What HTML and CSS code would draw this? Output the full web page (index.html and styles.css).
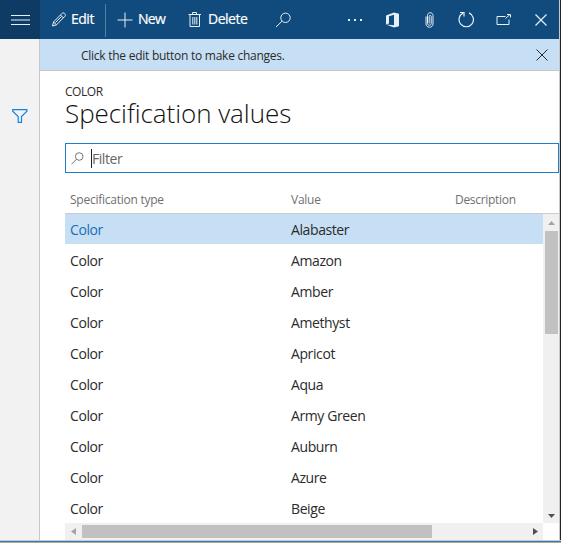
FILE: index.html
```html
<!DOCTYPE html>
<html lang="en">
<head>
<meta charset="utf-8">
<title>Specification values</title>
<link rel="stylesheet" href="styles.css">
</head>
<body>
<div class="window">
  <header class="toolbar">
    <button class="menu" aria-label="Menu"><svg width="20" height="12" viewBox="0 0 20 12"><path d="M0 1.500h19M0 6h19M0 10.500h19"/></svg></button>
    <button class="action edit"><svg width="17" height="17" viewBox="0 0 17 17"><path d="M1.500 15l1-4L11 2.400c1.700-1.700 4.600 1.200 2.900 2.900L5.500 13.800zM9.500 4l3 3M2.500 11l3 2.800M4.500 11.500l6-6"/></svg><span>Edit</span></button>
    <button class="action new"><svg width="16" height="16" viewBox="0 0 16 16"><path d="M8 .5v15M.5 8h15"/></svg><span>New</span></button>
    <button class="action delete"><svg width="14" height="16" viewBox="0 0 14 16"><path d="M.5 2.500h12.500M4.500 2.500v-2h4v2M2 2.500v12h9.500v-12M4.800 5v7.500M6.800 5v7.500M8.800 5v7.500"/></svg><span>Delete</span></button>
    <button class="search" aria-label="Search"><svg width="17" height="16" viewBox="0 0 17 16"><circle cx="10.500" cy="5.800" r="4.700"/><path d="M7 9.200L1 15"/></svg></button>
    <div class="tools">
      <svg class="more" width="16" height="4" viewBox="0 0 16 4"><path d="M1 1h2v2H1zM7 1h2v2H7zM13 1h2v2h-2z"/></svg>
      <svg class="office" width="13" height="16" viewBox="0 0 13 16"><path fill-rule="evenodd" d="M0 3.500L8 .5l5 1.300v12.400L8 15.500l-8-3 8 .7V2.800L3 4.200v7.300l-3 1z"/></svg>
      <svg class="clip" width="9" height="16" viewBox="0 0 9 16"><path d="M1 4.500v7.500c0 4.300 7 4.300 7 0V3.500c0-3.700-5.500-3.700-5.500 0v8c0 2.400 3.700 2.400 3.700 0V4.500c0-1.500-2-1.500-2 0v7"/></svg>
      <svg class="refresh" width="17" height="17" viewBox="0 0 17 17"><path d="M5 2.100A7.200 7.200 0 1 0 11 1.900M2 1.500h4v4"/></svg>
      <svg class="popout" width="16" height="13" viewBox="0 0 16 13"><path d="M9.500 3.500H1v8h12V6.500M9.500 5.500l4.500-4M11 1.500h3.500v3"/></svg>
      <svg class="close" width="12" height="12" viewBox="0 0 12 12"><path d="M.5.5l11 11M11.500.5l-11 11"/></svg>
    </div>
  </header>
  <div class="body">
    <aside class="rail"><svg width="16" height="14" viewBox="0 0 16 14"><path d="M.7.700h14.200v1.500L9.500 7.500v5.800H6.200V7.500L.7 2.200z"/></svg></aside>
    <main class="main">
      <div class="message"><span class="message-text">Click the edit button to make changes.</span><svg width="12" height="12" viewBox="0 0 12 12"><path d="M.5.5l11 11M11.500.5l-11 11"/></svg></div>
      <div class="page">
        <div class="caption">COLOR</div>
        <h1>Specification values</h1>
        <div class="filter"><svg width="13" height="13" viewBox="0 0 13 13"><circle cx="8.200" cy="4.500" r="3.800"/><path d="M5.500 7.200L.5 12.300"/></svg><i class="caret"></i><span>Filter</span></div>
        <div class="heads"><span class="h-type">Specification type</span><span class="h-value">Value</span><span class="h-desc">Description</span></div>
        <div class="grid">
          <div class="rows">
            <div class="row selected"><span>Color</span><span>Alabaster</span></div>
            <div class="row"><span>Color</span><span>Amazon</span></div>
            <div class="row"><span>Color</span><span>Amber</span></div>
            <div class="row"><span>Color</span><span>Amethyst</span></div>
            <div class="row"><span>Color</span><span>Apricot</span></div>
            <div class="row"><span>Color</span><span>Aqua</span></div>
            <div class="row"><span>Color</span><span>Army Green</span></div>
            <div class="row"><span>Color</span><span>Auburn</span></div>
            <div class="row"><span>Color</span><span>Azure</span></div>
            <div class="row"><span>Color</span><span>Beige</span></div>
          </div>
          <div class="vscroll"><svg width="7" height="4" viewBox="0 0 7 4"><path fill="#a3a3a3" d="M0 4L3.500 0 7 4z"/></svg><div class="vthumb"></div><svg class="down" width="7" height="4" viewBox="0 0 7 4"><path fill="#505050" d="M0 0h7L3.500 4z"/></svg></div>
          <div class="hscroll"><svg width="5" height="7" viewBox="0 0 5 7"><path fill="#a3a3a3" d="M5 0v7L0 3.500z"/></svg><div class="hthumb"></div><svg class="right" width="5" height="7" viewBox="0 0 5 7"><path fill="#505050" d="M0 0l5 3.500L0 7z"/></svg></div>
        </div>
      </div>
    </main>
  </div>
  <div class="edge"></div>
</div>
</body>
</html>
```
FILE: styles.css
```css
* { box-sizing: border-box; }
body {
  margin: 0;
  width: 561px;
  height: 543px;
  overflow: hidden;
  background: #fff;
  font-family: "Open Sans", "Noto Sans", sans-serif;
  color: #2b2b2b;
}
svg { display: block; flex: none; fill: none; stroke: currentColor; stroke-width: 1; }
button { border: 0; padding: 0; background: none; font: inherit; color: inherit; }
.window {
  height: 543px;
  display: flex;
  flex-direction: column;
  border-right: 1px solid #222;
  box-shadow: inset -1px 0 #c8c8c8;
  padding-right: 1px;
}
.edge { height: 3px; flex: none; margin-right: -2px; border-top: 1px solid #c8c8c8; background: #2f7fc0; border-bottom: 1px solid #ada69b; }
.toolbar { height: 39px; flex: none; display: flex; background: #114a7c; color: #e6f0f8; }
.menu { width: 40px; background: #0e3b64; display: flex; align-items: center; padding-left: 11px; }
.menu svg { stroke-width: 1.200; }
.action { display: flex; align-items: center; font-size: 14px; -webkit-text-stroke: .2px; white-space: nowrap; }
.action span { position: relative; top: -1px; color: #fff; }
.edit { width: 66px; height: 33px; margin-top: 4px; padding: 0 0 2px 11px; gap: 3px; border-right: 1px solid #55809f; }
.edit span { letter-spacing: -.5px; }
.new { width: 82px; padding-left: 11px; gap: 5px; }
.new span { letter-spacing: -.7px; }
.delete { width: 87px; gap: 6px; }
.delete span { letter-spacing: -.5px; }
.search { display: flex; align-items: center; }
.tools { flex: 1; display: flex; align-items: center; padding-left: 55px; }
.more, .office { fill: currentColor; stroke: none; }
.office { margin-left: 23px; }
.clip { margin-left: 26px; }
.refresh { margin-left: 24px; stroke-width: 1.200; }
.popout { margin-left: 21px; }
.close { margin-left: 23px; stroke-width: 1.200; }
.body { height: 501px; flex: none; display: flex; }
.rail { width: 40px; background: #f2f2f2; border-right: 1px solid #c8c8c8; padding: 70px 0 0 12px; color: #1684dc; }
.rail svg { stroke-width: 1.200; }
.main { flex: 1; min-width: 0; }
.message {
  height: 32px;
  display: flex;
  align-items: center;
  justify-content: space-between;
  padding: 0 11px 0 41px;
  background: #c7dff4;
  border-bottom: 1px solid #c8c8c8;
  font-size: 12px;
}
.message-text { letter-spacing: -.26px; position: relative; top: 1px; }
.page { padding-left: 25px; }
.caption { height: 29px; padding-top: 12px; line-height: 17px; font-size: 12px; letter-spacing: -.45px; }
h1 { margin: 0; height: 43px; line-height: 26px; font-size: 26px; font-weight: 300; letter-spacing: -.05px; color: #111; white-space: nowrap; }
.filter { height: 30px; border: 1px solid #1c7fce; display: flex; align-items: center; padding-left: 5px; color: #666; font-size: 14px; }
.filter span { letter-spacing: -.45px; }
.filter svg { stroke-width: .9; }
.caret { width: 1px; height: 19px; margin-left: 7px; background: #222; }
.heads { height: 41px; display: flex; align-items: center; padding: 12px 0 0 5px; font-size: 12px; color: #707070; border-bottom: 1px solid #ccc; }
.h-type { width: 221px; letter-spacing: -.25px; }
.h-value { width: 164px; letter-spacing: -.25px; }
.h-desc { letter-spacing: -.3px; }
.grid { display: grid; grid-template: 309px 17px / 478px 16px; }
.rows { overflow: hidden; }
.row { height: 31px; display: grid; grid-template-columns: 221px 1fr; align-items: center; padding-left: 5px; font-size: 14px; letter-spacing: -.4px; }
.row span { position: relative; top: 1px; }
.row.selected { height: 30px; background: #c7dff4; }
.row.selected span { top: 0; }
.selected span:first-child { color: #1b6eb5; }
.vscroll, .hscroll { background: #f0f0f0; display: flex; align-items: center; }
.vscroll { flex-direction: column; padding: 7px 0 5px; }
.vscroll svg, .hscroll svg { stroke: none; }
.vthumb { width: 13px; height: 103px; margin-top: 6px; background: #c1c1c1; }
.down { margin-top: auto; }
.hscroll { padding: 0 5px 0 6px; }
.hthumb { width: 350px; height: 13px; margin-left: 6px; background: #c1c1c1; }
.right { margin-left: auto; }
```
